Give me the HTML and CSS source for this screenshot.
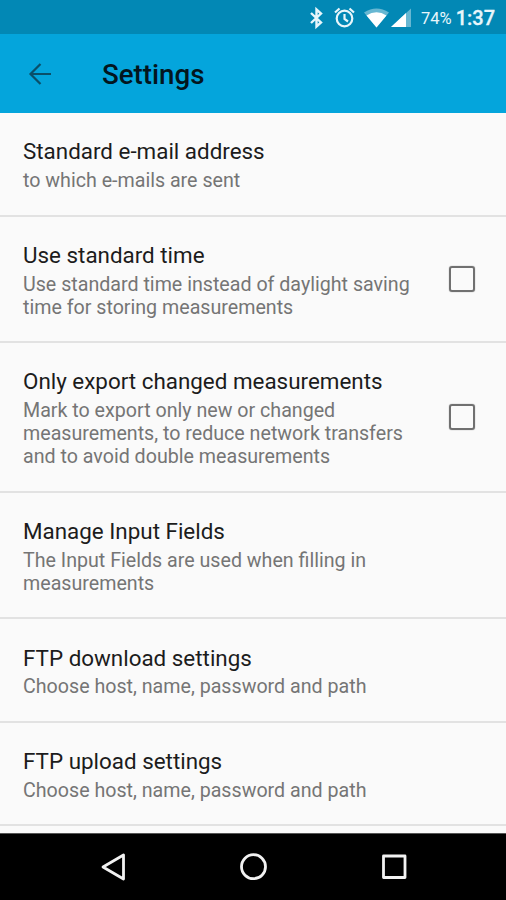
FILE: index.html
```html
<!DOCTYPE html>
<html lang="en">
<head>
<meta charset="utf-8">
<title>Settings</title>
<link rel="stylesheet" href="styles.css">
</head>
<body>
<div class="status">
  <svg class="status-icons" width="112" height="34" viewBox="0 0 112 34">
    <path d="M5 13l10 9.500L10.500 26.500V9.500l4.500 4L5 23" fill="none" stroke="#e8f6fb" stroke-width="2.400"/>
    <g fill="none" stroke="#e8f6fb" stroke-width="2.200"><circle cx="38.500" cy="18.500" r="7.800"/><path d="M38.500 14v5l3.500 2.500M29 12.500l4.500-4M48 12.500l-4.500-4"/></g>
    <path d="M58 12.500Q70.500 4.500 83 12.500L70.500 27.500Z" fill="#fff" fill-opacity=".4"/>
    <path d="M60.500 15.500Q70.500 9 80.500 15.500L70.500 27.500Z" fill="#fff"/>
    <path d="M105 8.500V27H85Z" fill="#fff" fill-opacity=".4"/>
    <path d="M100 13V27H85Z" fill="#fff"/>
  </svg>
  <span class="battery">74%</span>
  <span class="clock">1:37</span>
</div>
<header class="bar">
  <svg class="back" width="24" height="22" viewBox="0 0 24 22"><path d="M23 11H3M12.500 1L2.500 11l10 10" fill="none" stroke="#0a4f69" stroke-width="2.200"/></svg>
  <h1>Settings</h1>
</header>
<main class="list">
  <section class="row"><div class="text"><h2>Standard e-mail address</h2><p>to which e-mails are sent</p></div></section>
  <section class="row"><div class="text"><h2>Use standard time</h2><p>Use standard time instead of daylight saving<br>time for storing measurements</p></div><i class="box"></i></section>
  <section class="row"><div class="text"><h2>Only export changed measurements</h2><p>Mark to export only new or changed<br>measurements, to reduce network transfers<br>and to avoid double measurements</p></div><i class="box"></i></section>
  <section class="row"><div class="text"><h2>Manage Input Fields</h2><p>The Input Fields are used when filling in<br>measurements</p></div></section>
  <section class="row"><div class="text"><h2>FTP download settings</h2><p>Choose host, name, password and path</p></div></section>
  <section class="row"><div class="text"><h2>FTP upload settings</h2><p>Choose host, name, password and path</p></div></section>
</main>
<nav class="nav">
  <svg width="506" height="66" viewBox="0 0 506 66" fill="none" stroke="#f2f2f2" stroke-width="2.800">
    <path d="M123.500 21v24L103 33Z" stroke-linejoin="round"/><circle cx="253.500" cy="32.700" r="12"/><rect x="383.500" y="22" width="21.500" height="21.500" stroke-linejoin="round"/>
  </svg>
</nav>
</body>
</html>
```
FILE: styles.css
```css
* { box-sizing: border-box; margin: 0; padding: 0; }
body { width: 506px; height: 900px; overflow: hidden; display: flex; flex-direction: column; background: #fafafa; font-family: Roboto, sans-serif; }
.status { height: 34px; flex: none; background: #0288b5; color: #e8f6fb; display: flex; align-items: center; justify-content: flex-end; padding-right: 11px; }
.status-icons { margin-right: 3px; }
.battery { font-size: 16.5px; margin-right: 4px; padding-top: 2px; }
.clock { font-size: 20px; font-weight: 500; padding-top: 2px; -webkit-text-stroke: .3px #e8f6fb; }
.bar { height: 79px; flex: none; background: #04a5dc; display: flex; align-items: center; padding: 0 28px; }
.back { margin-right: 50px; }
h1 { font-size: 27.7px; font-weight: 500; line-height: 32px; color: #03161e; padding-top: 2px; }
.list { flex: 1; min-height: 0; overflow: hidden; }
.row { display: flex; align-items: center; padding: 23.2px 31px 22.6px 23px; border-bottom: 2px solid #e2e2e2; }
.text { flex: 1; white-space: nowrap; }
h2 { margin-bottom: 2.8px; font-size: 22.4px; font-weight: 400; line-height: 30px; color: #1c1c1c; }
p { font-size: 19.65px; line-height: 23px; color: #757575; }
.box { width: 26px; height: 26px; flex: none; border: 2.5px solid #707070; box-shadow: 0 0 1px #707070; border-radius: 3px; }
.nav { height: 67px; flex: none; background: #000; border-top: 1px solid #555; }
.nav svg { display: block; }
```
